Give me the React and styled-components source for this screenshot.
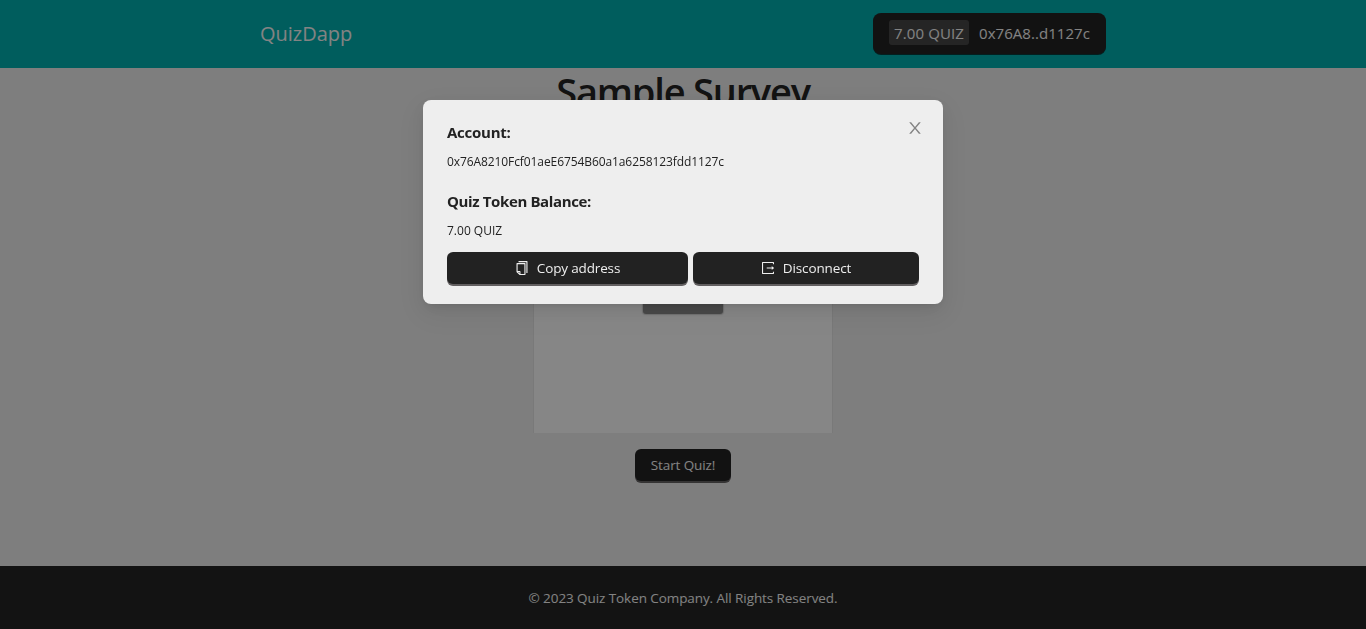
import React from "react";
import styled, { createGlobalStyle } from "styled-components";
import { AiOutlineCopy } from "react-icons/ai";

const GlobalStyle = createGlobalStyle`
  * { box-sizing: border-box; }
  body {
    margin: 0;
    font-family: "Open Sans", "Noto Sans", sans-serif;
    font-size: 13.5px;
    color: #222;
    background: #e6e6e6;
    overflow: hidden;
  }
  h1, h2, p { margin: 0; }
  button { font-family: inherit; border: 0; cursor: pointer; }
  svg { flex: none; display: block; }
`;

const Text = styled.span`
  white-space: nowrap;
  letter-spacing: ${(p) => p.$track || 0}px;
`;

const Page = styled.div`
  height: 629px;
  display: flex;
  flex-direction: column;
`;

const Header = styled.header`
  height: 68px;
  flex: none;
  display: flex;
  justify-content: space-between;
  align-items: flex-start;
  padding: 13px 260px 0;
  background: #00a9a9;
`;

const Brand = styled.div`
  font-size: 20px;
  line-height: 41px;
  color: #eee;
`;

const AccountButton = styled.button`
  width: 233px;
  height: 41px;
  display: flex;
  align-items: center;
  gap: 10px;
  padding: 0 16px 2px;
  border-radius: 8px;
  background: #222;
  color: #eee;
  font-size: 15px;
  box-shadow: 0 1px 0 rgba(5, 45, 45, 0.9);
`;

const Balance = styled.span`
  width: 80px;
  height: 25px;
  flex: none;
  line-height: 26px;
  text-align: center;
  border-radius: 3px;
  background: #444;
`;

const Main = styled.main`
  flex: 1;
  display: flex;
  flex-direction: column;
  align-items: center;
`;

const Title = styled.h1`
  height: 65px;
  font-size: 38px;
  font-weight: 600;
  line-height: 47px;
`;

const Card = styled.section`
  width: 300px;
  height: 300px;
  display: flex;
  flex-direction: column;
  align-items: center;
  padding-top: 149px;
  border: solid #dcdcdc;
  border-width: 0 1px;
  background: #f5f5f5;
`;

const CardAction = styled.div`
  width: 80px;
  height: 32px;
  border-radius: 3px;
  background: #858585;
  box-shadow: 0 0 1px 1px rgba(133, 133, 133, 0.35);
`;

const Button = styled.button`
  width: ${(p) => p.$width}px;
  height: 32px;
  display: flex;
  align-items: center;
  justify-content: center;
  gap: 8px;
  padding: 0;
  border-radius: 6px;
  background: #222;
  color: #eee;
  font-size: 13.5px;
  line-height: 22px;
  box-shadow: 0 2px 0 #625f60;
`;

const StartButton = styled(Button)`
  margin-top: 16px;
`;

const Footer = styled.footer`
  height: 63px;
  flex: none;
  display: flex;
  justify-content: center;
  align-items: center;
  line-height: 22px;
  background: #242424;
  color: #eee;
`;

const Mask = styled.div`
  position: fixed;
  inset: 0;
  padding-top: 100px;
  background: rgba(0, 0, 0, 0.45);
`;

const Dialog = styled.div`
  position: relative;
  width: 520px;
  height: 204px;
  margin: 0 auto;
  padding: 20px 24px;
  border-radius: 8px;
  background: #eee;
  box-shadow: 0 6px 16px 0 rgba(0, 0, 0, 0.08), 0 3px 6px -4px rgba(0, 0, 0, 0.12),
    0 9px 28px 8px rgba(0, 0, 0, 0.05);
`;

const CloseButton = styled.button`
  position: absolute;
  top: 17px;
  right: 17px;
  width: 22px;
  height: 22px;
  display: grid;
  place-items: center;
  padding: 0;
  background: transparent;
  color: #838383;
`;

const Label = styled.h2`
  height: 28px;
  font-size: 15px;
  font-weight: 700;
  line-height: 24px;
`;

const Value = styled.p`
  height: ${(p) => p.$height}px;
  font-size: 12px;
  line-height: 27px;
`;

const Actions = styled.div`
  display: flex;
  gap: 5px;
`;

const glyphBox = "64 64 896 896";

const CloseIcon = () => (
  <svg width="16" height="16" viewBox={glyphBox} fill="currentColor">
    <path d="M563.8 512l262.5-312.9c4.4-5.2.7-13.1-6.1-13.1h-79.8c-4.7 0-9.2 2.1-12.3 5.7L511.6 449.8 295.1 191.7c-3-3.6-7.5-5.7-12.3-5.7H203c-6.8 0-10.5 7.9-6.1 13.1L459.4 512 196.9 824.9A7.95 7.95 0 0 0 203 838h79.8c4.7 0 9.2-2.1 12.3-5.7l216.5-258.1 216.5 258.1c3 3.6 7.5 5.7 12.3 5.7h79.8c6.8 0 10.5-7.9 6.1-13.1L563.8 512z" />
  </svg>
);

const ExportIcon = () => (
  <svg width="14" height="14" viewBox={glyphBox} fill="currentColor">
    <path d="M888.3 757.4h-53.8c-4.2 0-7.7 3.5-7.7 7.7v61.8H197.1V197.1h629.8v61.8c0 4.2 3.5 7.7 7.7 7.7h53.8c4.2 0 7.7-3.4 7.7-7.7V158.7c0-17-13.7-30.7-30.7-30.7H158.7c-17 0-30.7 13.7-30.7 30.7v706.6c0 17 13.7 30.7 30.7 30.7h706.6c17 0 30.7-13.7 30.7-30.7V765.1c0-4.3-3.5-7.7-7.7-7.7zm18.6-251.7L765 393.7c-5.3-4.2-13-.4-13 6.3v76H438c-4.4 0-8 3.6-8 8v56c0 4.4 3.6 8 8 8h314v76c0 6.7 7.8 10.5 13 6.3l141.9-112a8 8 0 0 0 0-12.6z" />
  </svg>
);

export default function App() {
  return (
    <>
      <GlobalStyle />
      <Page>
        <Header>
          <Brand><Text>QuizDapp</Text></Brand>
          <AccountButton>
            <Balance><Text $track={0.1}>7.00 QUIZ</Text></Balance>
            <Text $track={0.05}>0x76A8..d1127c</Text>
          </AccountButton>
        </Header>
        <Main>
          <Title><Text $track={-1.2}>Sample Survey</Text></Title>
          <Card><CardAction /></Card>
          <StartButton $width={96}><Text $track={-0.12}>Start Quiz!</Text></StartButton>
        </Main>
        <Footer><Text $track={-0.08}>© 2023 Quiz Token Company. All Rights Reserved.</Text></Footer>
      </Page>
      <Mask>
        <Dialog role="dialog">
          <CloseButton aria-label="Close"><CloseIcon /></CloseButton>
          <Label><Text $track={-0.25}>Account:</Text></Label>
          <Value $height={41}>
            <Text $track={-0.09}>0x76A8210Fcf01aeE6754B60a1a6258123fdd1127c</Text>
          </Value>
          <Label><Text $track={-0.37}>Quiz Token Balance:</Text></Label>
          <Value $height={35}><Text>7.00 QUIZ</Text></Value>
          <Actions>
            <Button $width={241}>
              <AiOutlineCopy size={14} viewBox={glyphBox} />
              <Text $track={-0.15}>Copy address</Text>
            </Button>
            <Button $width={226}>
              <ExportIcon />
              <Text $track={-0.12}>Disconnect</Text>
            </Button>
          </Actions>
        </Dialog>
      </Mask>
    </>
  );
}
